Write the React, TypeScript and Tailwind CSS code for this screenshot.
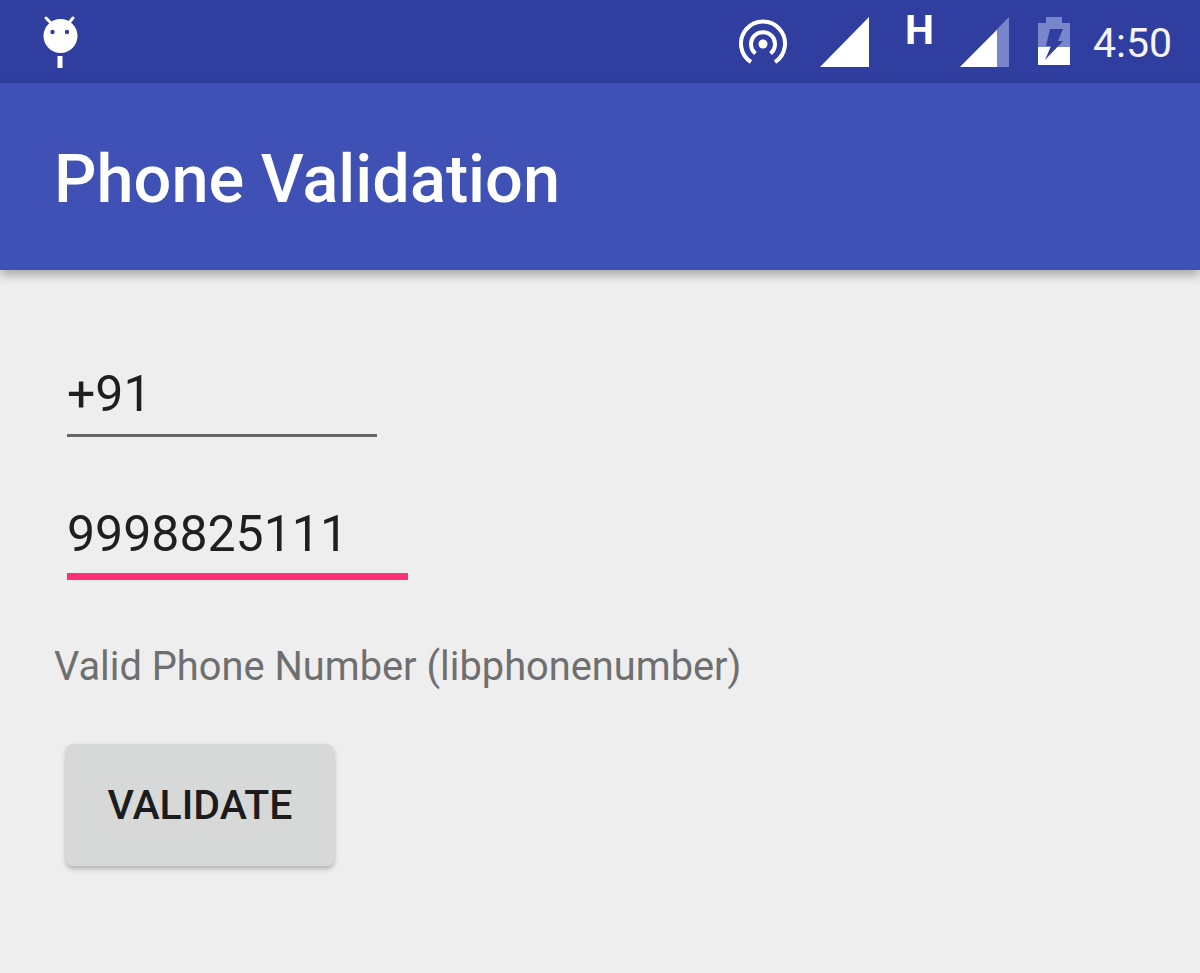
export default function App() {
  return (
    <div className="min-h-[973px] bg-[#eeeeee] font-['Roboto',sans-serif]">
      {/* Status bar */}
      <div className="flex h-[83px] items-start bg-[#303f9f] pl-[40px] pr-[28px]">
        <svg width="40" height="70" viewBox="0 0 40 70" className="shrink-0">
          <path d="M6 18 L13 25 M33 18 L27 25" stroke="#fff" strokeWidth="3" strokeLinecap="round" />
          <circle cx="20.5" cy="36" r="17" fill="#fff" />
          <circle cx="12.5" cy="32" r="2.2" fill="#303f9f" />
          <circle cx="27" cy="32" r="2.2" fill="#303f9f" />
          <rect x="17.5" y="56" width="5" height="12" fill="#fff" />
        </svg>
        <div className="ml-auto flex items-start">
          <svg width="50" height="70" viewBox="0 0 50 70" className="shrink-0">
            <g fill="none" stroke="#fff" strokeWidth="4">
              <path d="M12 62 A22 22 0 1 1 36 62" />
              <path d="M16.5 53.5 A12 12 0 1 1 31.5 53.5" />
            </g>
            <circle cx="24" cy="44" r="4.5" fill="#fff" />
          </svg>
          <svg width="52" height="70" viewBox="0 0 52 70" className="ml-[30px] shrink-0">
            <path d="M1 67 L50 17 V67 Z" fill="#fff" />
          </svg>
          <span className="ml-[34px] mt-[8px] w-[29px] text-[41px] font-bold leading-[44px] text-white">H</span>
          <svg width="52" height="70" viewBox="0 0 52 70" className="ml-[25px] shrink-0">
            <path d="M1 67 L50 17 V67 Z" fill="#7986cb" />
            <path d="M1 67 L38 30 V67 Z" fill="#fff" />
          </svg>
          <svg width="34" height="70" viewBox="0 0 34 70" className="ml-[26px] shrink-0">
            <path d="M9 17 H25 V23 H33 V47 H1 V23 H9 Z" fill="#7986cb" />
            <path d="M1 47 H33 V65 H1 Z" fill="#fff" />
            <path d="M13 29 H26 L21 41 H26 L8 60 L14 46 H9 Z" fill="#303f9f" />
          </svg>
          <span className="ml-[22px] mt-[18px] text-[41px] leading-[50px] text-[#f4f5fb]">4:50</span>
        </div>
      </div>

      {/* App bar */}
      <div className="flex h-[187px] items-center bg-[#3f51b5] pl-[54px] pt-[6px] shadow-[0_5px_10px_rgba(0,0,0,0.3)]">
        <h1 className="text-[66.7px] font-medium leading-none text-white">Phone Validation</h1>
      </div>

      {/* Form */}
      <div className="flex flex-col items-start pl-[54px] pt-[94px]">
        <div className="ml-[13px] w-[310px] border-b-[3px] border-[#666666] pb-[10px] text-[50px] leading-[60px] text-[#1f1f1f]">
          +91
        </div>
        <div className="ml-[13px] mt-[67px] w-[341px] border-b-[7px] border-[#ff2f78] pb-[9px] text-[50px] leading-[60px] text-[#1f1f1f]">
          9998825111
        </div>
        <p className="mt-[60px] text-[39.8px] leading-[54px] text-[#6f6f6f]">Valid Phone Number (libphonenumber)</p>
        <button className="ml-[12px] mt-[50px] h-[122px] w-[268px] rounded-[7px] bg-[#d7d8d8] pt-[2px] text-[41px] font-medium text-[#1c1c1c] shadow-[0_3px_5px_rgba(0,0,0,0.25)]">
          VALIDATE
        </button>
      </div>
    </div>
  );
}
